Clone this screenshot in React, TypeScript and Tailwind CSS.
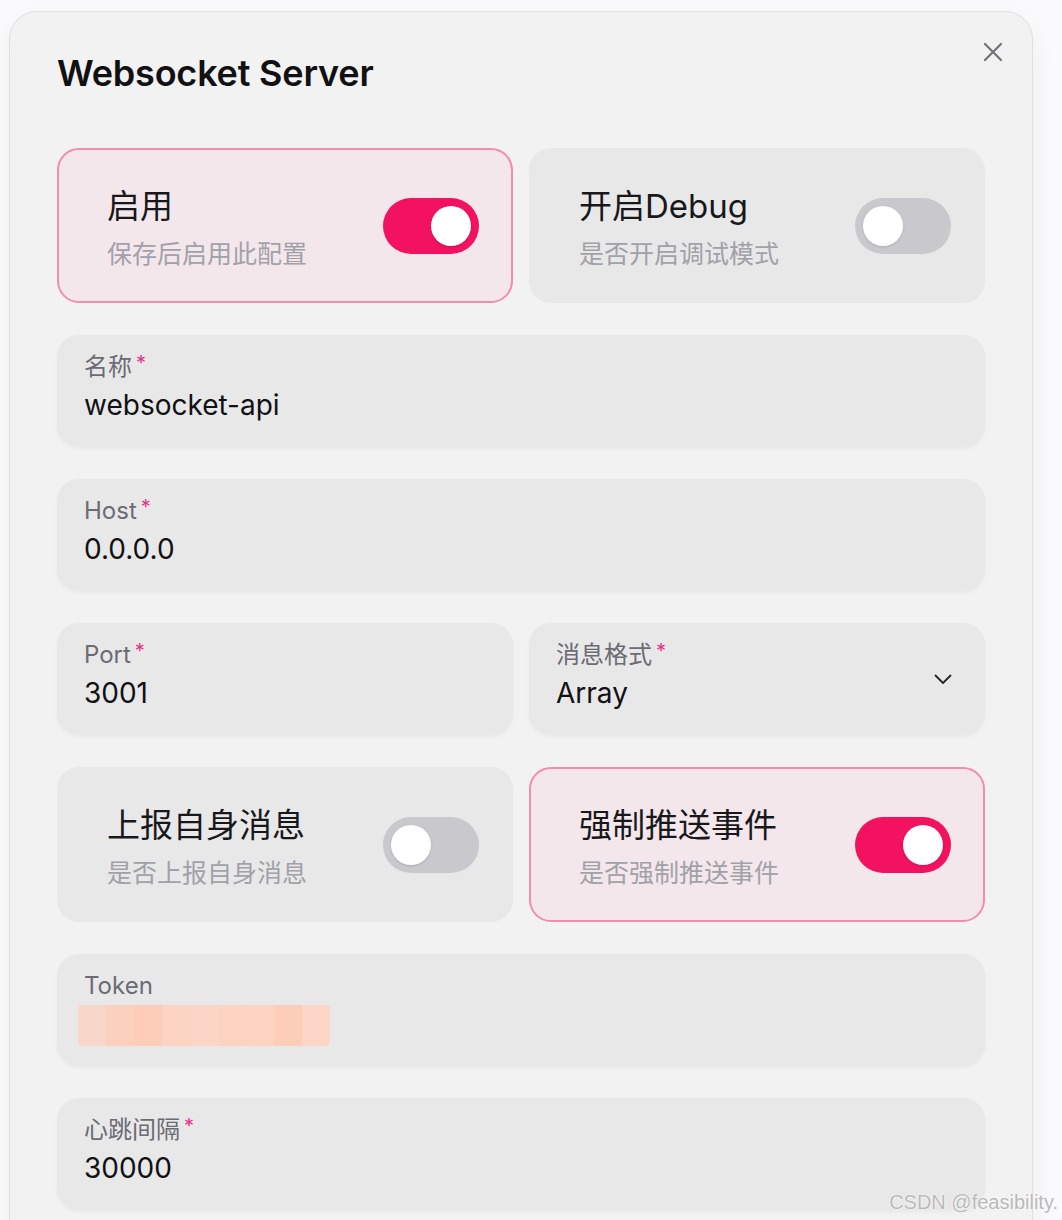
import { useState } from 'react';

const font = { fontFamily: 'Inter, "Noto Sans CJK SC", sans-serif' };

function Toggle({ on }: { on: boolean }) {
  return (
    <div
      className={
        on
          ? 'relative h-14 w-24 shrink-0 rounded-full bg-[#f31260]'
          : 'relative h-14 w-24 shrink-0 rounded-full bg-[#c9c9cd]'
      }
    >
      <div
        className={
          on
            ? 'absolute right-2 top-2 h-10 w-10 rounded-full bg-white shadow-sm'
            : 'absolute left-2 top-2 h-10 w-10 rounded-full bg-white shadow-sm'
        }
      />
    </div>
  );
}

function SwitchCard({ title, desc, on }: { title: string; desc: string; on: boolean }) {
  return (
    <div
      className={
        on
          ? 'flex h-[155px] items-center justify-between rounded-[22px] border-2 border-[#f28dab] bg-[#f3e7eb] pl-12 pr-8'
          : 'flex h-[155px] items-center justify-between rounded-[22px] border-2 border-transparent bg-[#e8e8e9] pl-12 pr-8'
      }
    >
      <div className="flex flex-col gap-3 pt-[4px]">
        <div className="text-[33px] leading-10 text-[#18181b]">{title}</div>
        <div className="text-[25px] leading-8 text-[#a1a1a8]">{desc}</div>
      </div>
      <Toggle on={on} />
    </div>
  );
}

function Field({ label, value, required = true, select = false }: { label: string; value?: string; required?: boolean; select?: boolean }) {
  return (
    <div className="relative flex h-[112px] flex-col rounded-[22px] bg-[#e8e8e9] px-[27px] pt-[16px] shadow-[0_2px_4px_rgba(0,0,0,0.04)]">
      <div className="flex items-start text-[24px] leading-8 text-[#6b6b73]">
        {label}
        {required && <span className="ml-[4px] text-[20px] leading-6 text-[#e8338a]">*</span>}
      </div>
      {value !== undefined ? (
        <div className="mt-[4px] text-[28px] leading-9 text-[#111113]">{value}</div>
      ) : (
        <TokenMask />
      )}
      {select && (
        <svg
          className="absolute right-[32px] top-[46px]"
          width="20"
          height="20"
          viewBox="0 0 20 20"
          fill="none"
          stroke="#27272a"
          strokeWidth="1.8"
          strokeLinecap="round"
          strokeLinejoin="round"
        >
          <path d="M2.5 6.5l7.5 7.5 7.5-7.5" />
        </svg>
      )}
    </div>
  );
}

function TokenMask() {
  const cells = ['#f8d6ca', '#fbd0bf', '#fdcdb9', '#fdd3c3', '#fcd5c6', '#fdd2c1', '#fdd3c4', '#fcceba', '#fdd6c7'];
  return (
    <div className="ml-[-6px] mt-[3px] flex h-[41px] w-[252px] overflow-hidden rounded-[4px]">
      {cells.map((c, i) => (
        <div key={i} className="h-full flex-1" style={{ backgroundColor: c }} />
      ))}
    </div>
  );
}

export default function App() {
  const [open] = useState(true);
  return (
    <div className="relative h-[1220px] w-full overflow-hidden bg-[#fbfafc] pl-[9px] pt-[11px]" style={font}>
      {open && (
        <div className="relative w-[1024px] rounded-t-[28px] border border-[#e0e0e4] bg-[#f2f2f2] px-[47px] pb-12 pt-[41px] shadow-[0_8px_30px_rgba(0,0,0,0.06)]">
          <button className="absolute right-[28px] top-[29px] p-[1px]">
            <svg width="20" height="20" viewBox="0 0 20 20" fill="none" stroke="#71717a" strokeWidth="2.2" strokeLinecap="round">
              <path d="M2 2l16 16M18 2L2 18" />
            </svg>
          </button>
          <h2 className="text-[36px] font-semibold leading-10 tracking-[-0.2px] text-[#111113]">Websocket Server</h2>
          <div className="mt-[55px] flex flex-col gap-8">
            <div className="grid grid-cols-2 gap-4">
              <SwitchCard title="启用" desc="保存后启用此配置" on />
              <SwitchCard title="开启Debug" desc="是否开启调试模式" on={false} />
            </div>
            <Field label="名称" value="websocket-api" />
            <Field label="Host" value="0.0.0.0" />
            <div className="grid grid-cols-2 gap-4">
              <Field label="Port" value="3001" />
              <Field label="消息格式" value="Array" select />
            </div>
            <div className="grid grid-cols-2 gap-4">
              <SwitchCard title="上报自身消息" desc="是否上报自身消息" on={false} />
              <SwitchCard title="强制推送事件" desc="是否强制推送事件" on />
            </div>
            <Field label="Token" required={false} />
            <Field label="心跳间隔" value="30000" />
          </div>
        </div>
      )}
      <div
        className="absolute bottom-[3px] right-[4px] text-[20px] text-[#b9b9b9] [text-shadow:0_0_2px_#ffffff,0_0_1px_#ffffff]"
        style={{ fontFamily: '"Liberation Sans", Arial, sans-serif' }}
      >
        CSDN @feasibility.
      </div>
    </div>
  );
}
